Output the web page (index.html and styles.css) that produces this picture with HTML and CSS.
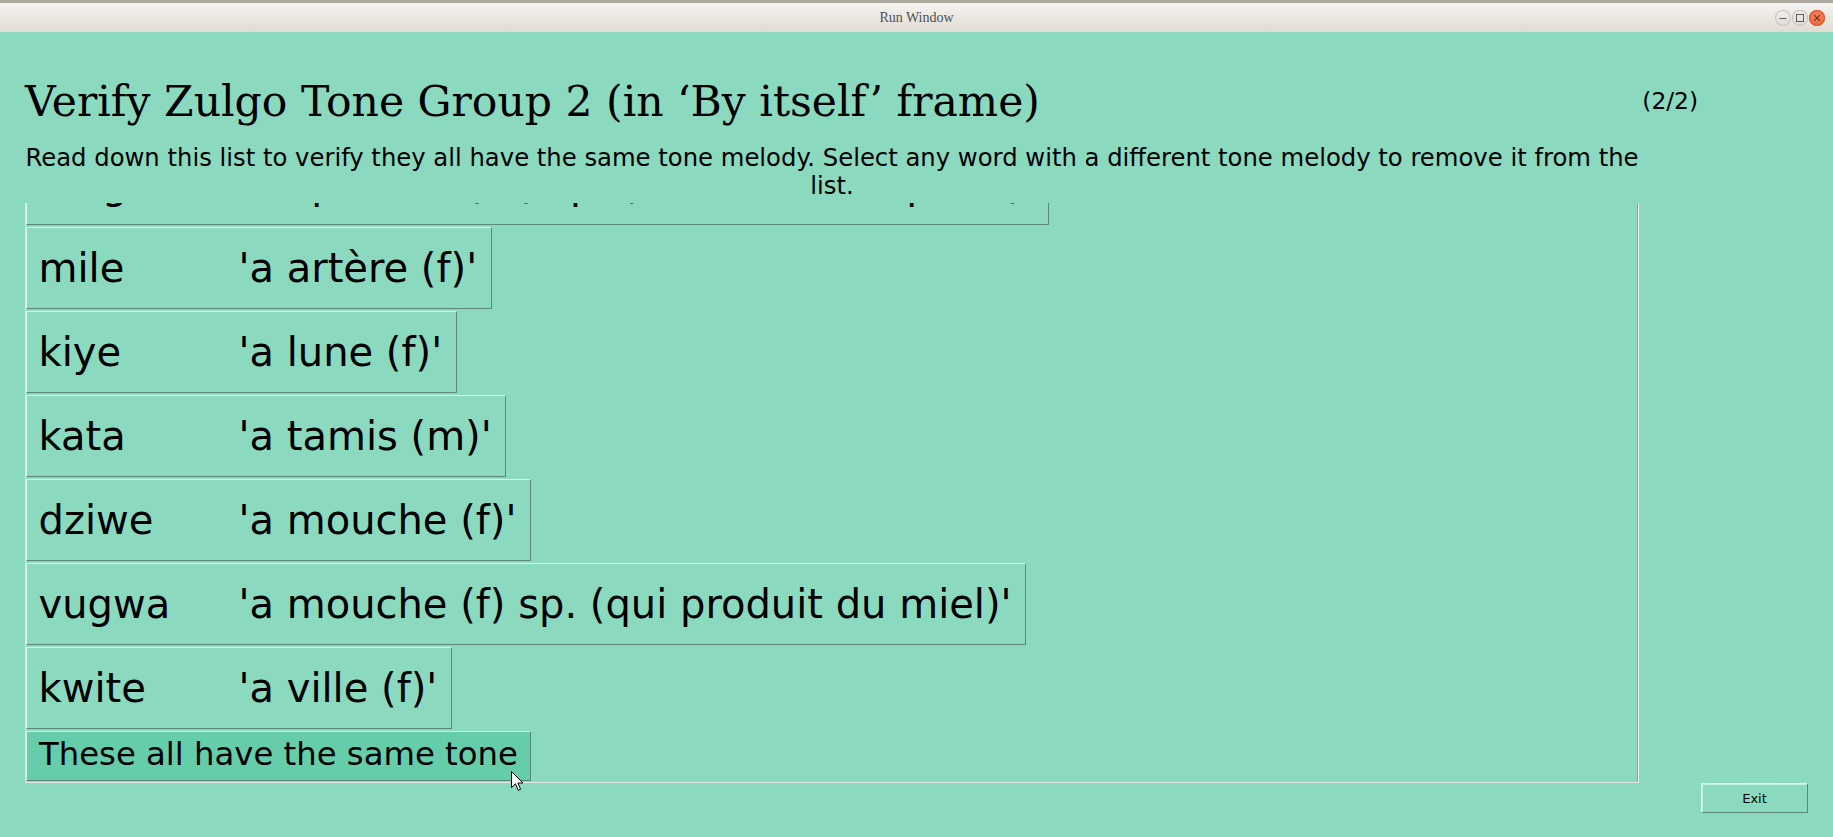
FILE: index.html
```html
<!DOCTYPE html>
<html lang="en">
<head>
<meta charset="utf-8">
<title>Run Window</title>
<link rel="stylesheet" href="styles.css">
</head>
<body>
<div class="window">
  <div class="titlebar">
    <div class="tb-spacer"></div>
    <div class="tb-title">Run Window</div>
    <div class="tb-controls">
      <span class="ctl ctl-min"><svg width="16" height="16" viewBox="0 0 16 16"><line x1="4.5" y1="8.5" x2="11.5" y2="8.5" stroke="#5e5e5e" stroke-width="1"/></svg></span>
      <span class="ctl ctl-max"><svg width="16" height="16" viewBox="0 0 16 16"><rect x="4.5" y="4.5" width="7" height="7" fill="none" stroke="#5e5e5e" stroke-width="1"/></svg></span>
      <span class="ctl ctl-close"><svg width="16" height="16" viewBox="0 0 16 16"><path d="M5.2 5.2 L10.8 10.8 M10.8 5.2 L5.2 10.8" stroke="#6a2a14" stroke-width="1.1"/></svg></span>
    </div>
  </div>

  <div class="content">
    <div class="header">
      <h1 class="heading">Verify Zulgo Tone Group 2 (in ‘By itself’ frame)</h1>
      <div class="progress">(2/2)</div>
    </div>
    <p class="instructions">Read down this list to verify they all have the same tone melody. Select any word with a different tone melody to remove it from the list.</p>

    <div class="list-frame">
      <div class="list">
        <div class="row"><span class="word">magava</span><span class="gloss">'a épervier (m) sp. (un oiseau de proie)'</span></div>
        <div class="row"><span class="word">mile</span><span class="gloss">'a artère (f)'</span></div>
        <div class="row"><span class="word">kiye</span><span class="gloss">'a lune (f)'</span></div>
        <div class="row"><span class="word">kata</span><span class="gloss">'a tamis (m)'</span></div>
        <div class="row"><span class="word">dziwe</span><span class="gloss">'a mouche (f)'</span></div>
        <div class="row"><span class="word">vugwa</span><span class="gloss">'a mouche (f) sp. (qui produit du miel)'</span></div>
        <div class="row"><span class="word">kwite</span><span class="gloss">'a ville (f)'</span></div>
        <div class="same-btn">These all have the same tone</div>
      </div>
    </div>

    <div class="footer">
      <div class="exit-btn">Exit</div>
    </div>
  </div>

  <svg class="cursor" width="14" height="22" viewBox="0 0 14 22"><path d="M0.5 0.5 L0.5 16.5 L4.5 12.8 L7.3 19.3 L9.6 18.3 L6.9 12 L12 12 Z" fill="#ffffff" stroke="#000000" stroke-width="1" stroke-linejoin="round"/></svg>
</div>
</body>
</html>
```

FILE: styles.css
```css
html, body {
  margin: 0;
  padding: 0;
}

body {
  width: 1833px;
  height: 837px;
  overflow: hidden;
  background: #8bd9bf;
  font-family: "DejaVu Sans", "Noto Sans", sans-serif;
  color: #000;
}

.window {
  position: relative;
  width: 1833px;
  height: 837px;
}

/* ---------- title bar ---------- */
.titlebar {
  box-sizing: border-box;
  height: 32px;
  border-top: 3px solid #aca79f;
  background: linear-gradient(#f6f4f1, #e0dbd3);
  display: grid;
  grid-template-columns: 1fr auto 1fr;
  align-items: center;
}

.tb-title {
  font-family: "Liberation Serif", "DejaVu Serif", serif;
  font-size: 14px;
  line-height: 27px;
  color: #4e4e4e;
}

.tb-controls {
  display: flex;
  justify-content: flex-end;
  gap: 1px;
  padding-right: 8px;
}

.ctl {
  box-sizing: border-box;
  width: 16px;
  height: 16px;
  border-radius: 50%;
  display: flex;
}

.ctl-min,
.ctl-max {
  background: linear-gradient(#f2f0ed, #dedad4);
  box-shadow: inset 0 0 0 1px #c7c2bb;
}

.ctl-close {
  background: radial-gradient(circle at 50% 40%, #f6845c, #ea6034);
  box-shadow: inset 0 0 0 1px #d25a30;
}

/* ---------- content ---------- */
.content {
  padding: 45px 0 0 25px;
}

.header {
  display: flex;
  align-items: flex-start;
}

.heading {
  margin: 0;
  font-family: "DejaVu Serif", "Liberation Serif", serif;
  font-weight: 400;
  font-size: 42.5px;
  line-height: 49px;
}

.progress {
  margin-left: auto;
  margin-right: 135px;
  margin-top: 10px;
  font-size: 23.3px;
  line-height: 27px;
}

.instructions {
  box-sizing: border-box;
  width: 1630px;
  margin: 18px 0 0 -8px;
  text-align: center;
  font-size: 24.3px;
  line-height: 28px;
}

/* ---------- word list frame ---------- */
.list-frame {
  box-sizing: border-box;
  width: 1614px;
  height: 580px;
  margin-top: 3px;
  overflow: hidden;
  border-left: 1px solid #d3e6df;
  border-right: 1px solid #f6f6f6;
  border-bottom: 1px solid #e4e6e4;
  box-shadow: inset -1px 0 0 #909d98;
}

.list {
  display: flex;
  flex-direction: column;
  align-items: flex-start;
  gap: 2px;
  margin-top: -60px;
}

.row {
  border: 1px solid;
  border-color: #e3f6ef #5b8878 #5b8878 #e3f6ef;
  padding: 16px 13.5px 16px 11.5px;
  font-size: 40px;
  line-height: 48px;
  white-space: nowrap;
}

.word {
  display: inline-block;
  width: 200px;
}

.same-btn {
  box-sizing: border-box;
  height: 50px;
  border: 1px solid;
  border-color: #d7efe7 #4f8a76 #4f8a76 #d7efe7;
  background: #66cdaa;
  padding: 4px 12px 7px 12px;
  font-size: 32.3px;
  line-height: 37px;
  white-space: nowrap;
}

/* ---------- footer ---------- */
.footer {
  display: flex;
  justify-content: flex-end;
  padding-right: 25px;
}

.exit-btn {
  box-sizing: border-box;
  width: 107px;
  height: 30px;
  border: 1px solid;
  border-color: #eefaf6 #5b8878 #5b8878 #eefaf6;
  box-shadow: inset 1px 1px 0 #bff0e4;
  display: flex;
  align-items: center;
  justify-content: center;
  font-size: 13px;
}

/* ---------- mouse pointer overlay ---------- */
.cursor {
  position: absolute;
  left: 511px;
  top: 771px;
}
```
